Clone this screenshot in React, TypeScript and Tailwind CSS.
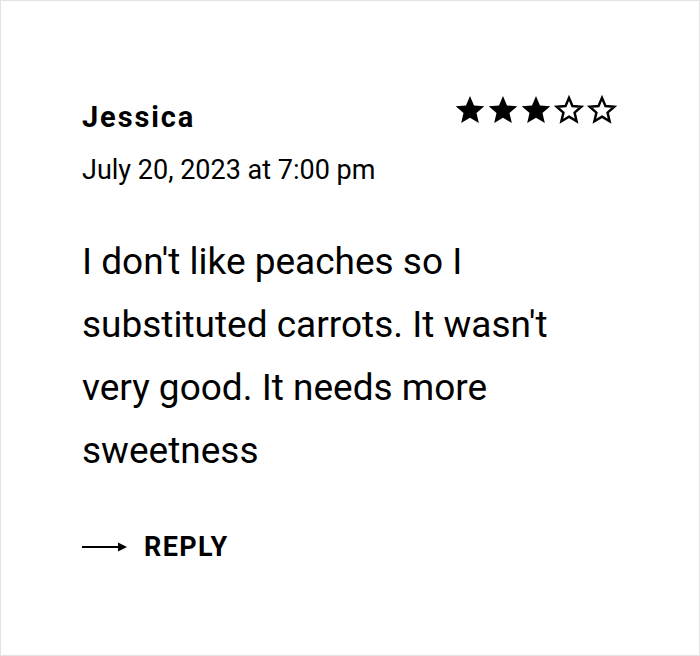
import React from "react";

const STAR = "M12 17.27L18.18 21l-1.64-7.03L22 9.24l-7.19-.61L12 2 9.19 8.63 2 9.24l5.46 4.73L5.82 21z";

function Star({ filled }: { filled: boolean }) {
  return (
    <svg width="30" height="29" viewBox="1.5 1.5 21 20" className="block">
      {filled ? (
        <path d={STAR} fill="#000" />
      ) : (
        <path
          d={STAR}
          transform="translate(12 11.8) scale(0.86) translate(-12 -11.8)"
          fill="none"
          stroke="#000"
          strokeWidth="2"
          strokeLinejoin="miter"
        />
      )}
    </svg>
  );
}

export default function App() {
  return (
    <div
      className="w-[700px] h-[656px] bg-white border border-[#e3e3e3] box-border text-black"
      style={{ fontFamily: "Roboto, 'Liberation Sans', sans-serif" }}
    >
      <div className="pl-[81px] pr-[81px] pt-[94px]">
        <div className="flex justify-between items-start">
          <div className="pt-[4px]">
            <div className="text-[29px] leading-[36px] font-bold tracking-[0.065em]">Jessica</div>
          </div>
          <div className="flex gap-[3px] mr-[1px]">
            <Star filled />
            <Star filled />
            <Star filled />
            <Star filled={false} />
            <Star filled={false} />
          </div>
        </div>
        <div className="mt-[19px] text-[27px] leading-[32px]">July 20, 2023 at 7:00 pm</div>
        <p className="mt-[44px] text-[37px] leading-[63px] w-[520px]">
          I don't like peaches so I substituted carrots. It wasn't very good. It needs more sweetness
        </p>
        <div className="mt-[49px] flex items-center gap-[17px]">
          <svg width="45" height="12" viewBox="0 0 45 12" className="block">
            <line x1="0" y1="6" x2="38" y2="6" stroke="#000" strokeWidth="2" />
            <path d="M36 1.5 L45 6 L36 10.5 Z" fill="#000" />
          </svg>
          <span className="text-[27px] leading-[32px] font-bold tracking-[0.05em]">REPLY</span>
        </div>
      </div>
    </div>
  );
}
